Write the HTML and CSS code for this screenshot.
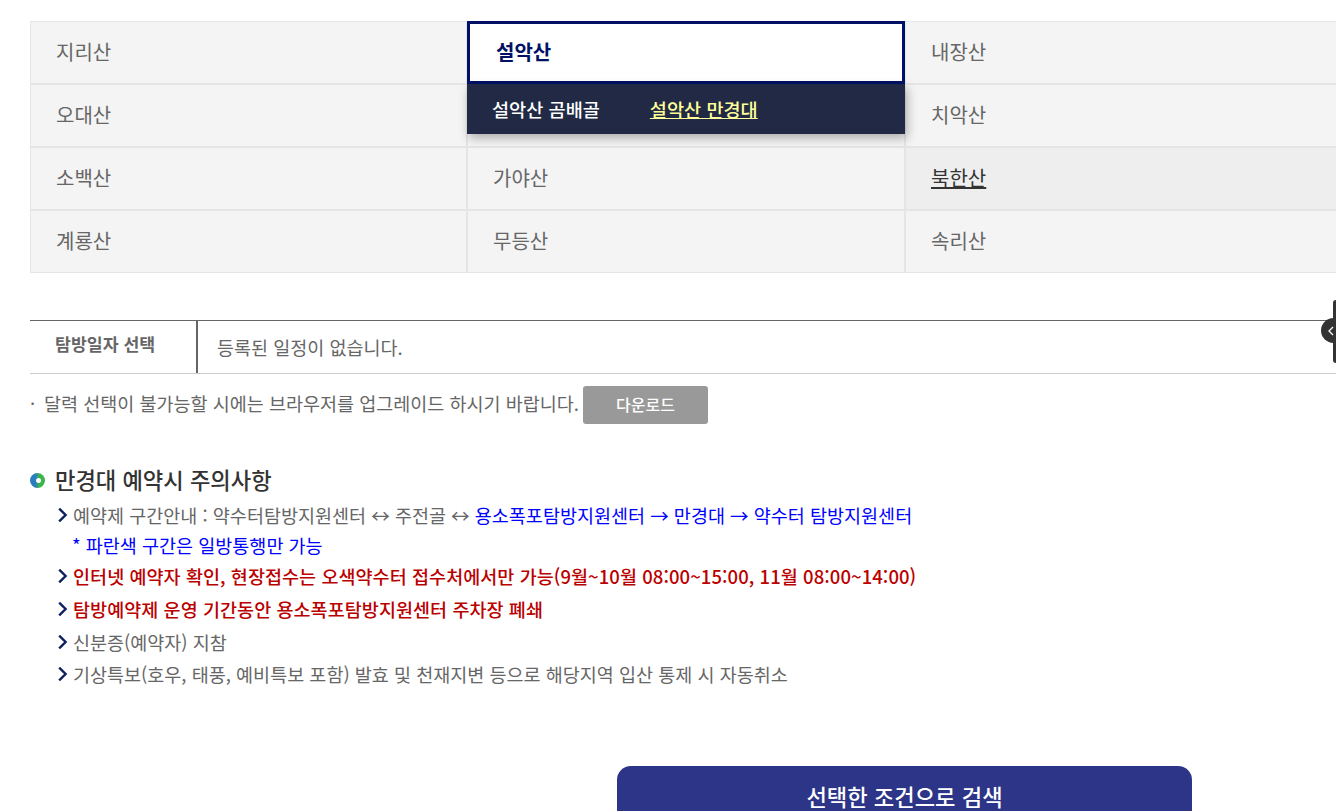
FILE: index.html
```html
<!DOCTYPE html>
<html lang="ko">
<head>
    <meta charset="UTF-8">
    <meta name="viewport" content="width=device-width, initial-scale=1.0">
    <title>탐방예약</title>
    <link rel="stylesheet" href="styles.css">
</head>
<body>
    <div class="wrap">
        <ul class="mountain-list">
            <li class="mountain">지리산</li>
            <li class="mountain selected">
                <span class="selected-name">설악산</span>
                <div class="sub-menu">
                    <a class="sub-link">설악산 곰배골</a>
                    <a class="sub-link active">설악산 만경대</a>
                </div>
            </li>
            <li class="mountain">내장산</li>
            <li class="mountain">오대산</li>
            <li class="mountain"></li>
            <li class="mountain">치악산</li>
            <li class="mountain">소백산</li>
            <li class="mountain">가야산</li>
            <li class="mountain hover"><a class="hover-link">북한산</a></li>
            <li class="mountain">계룡산</li>
            <li class="mountain">무등산</li>
            <li class="mountain">속리산</li>
        </ul>

        <div class="date-row">
            <div class="date-label">탐방일자 선택</div>
            <div class="date-value">등록된 일정이 없습니다.</div>
        </div>
        <div class="browser-note">
            <p class="note-text"><span class="note-dot">·</span>달력 선택이 불가능할 시에는 브라우저를 업그레이드 하시기 바랍니다.</p>
            <a class="btn-download">다운로드</a>
        </div>

        <h3 class="notice-title"><span class="title-dot"></span>만경대 예약시 주의사항</h3>
        <ul class="notice-list">
            <li>
                <svg class="arrow" width="10" height="14" viewBox="0 0 10 14"><path d="M1.2 .6 7.6 7l-6.4 6.4" fill="none" stroke="#0d2060" stroke-width="2.4"/></svg>
                <span>예약제 구간안내 : 약수터탐방지원센터 ↔ 주전골 ↔ <span class="blue">용소폭포탐방지원센터 → 만경대 → 약수터 탐방지원센터</span></span>
            </li>
            <li class="sub-note blue">* 파란색 구간은 일방통행만 가능</li>
            <li class="red">
                <svg class="arrow" width="10" height="14" viewBox="0 0 10 14"><path d="M1.2 .6 7.6 7l-6.4 6.4" fill="none" stroke="#0d2060" stroke-width="2.4"/></svg>
                <span>인터넷 예약자 확인, 현장접수는 오색약수터 접수처에서만 가능(9월~10월 08:00~15:00, 11월 08:00~14:00)</span>
            </li>
            <li class="red">
                <svg class="arrow" width="10" height="14" viewBox="0 0 10 14"><path d="M1.2 .6 7.6 7l-6.4 6.4" fill="none" stroke="#0d2060" stroke-width="2.4"/></svg>
                <span>탐방예약제 운영 기간동안 용소폭포탐방지원센터 주차장 폐쇄</span>
            </li>
            <li>
                <svg class="arrow" width="10" height="14" viewBox="0 0 10 14"><path d="M1.2 .6 7.6 7l-6.4 6.4" fill="none" stroke="#0d2060" stroke-width="2.4"/></svg>
                <span>신분증(예약자) 지참</span>
            </li>
            <li>
                <svg class="arrow" width="10" height="14" viewBox="0 0 10 14"><path d="M1.2 .6 7.6 7l-6.4 6.4" fill="none" stroke="#0d2060" stroke-width="2.4"/></svg>
                <span>기상특보(호우, 태풍, 예비특보 포함) 발효 및 천재지변 등으로 해당지역 입산 통제 시 자동취소</span>
            </li>
        </ul>

        <div class="search-area">
            <button class="btn-search" type="button">선택한 조건으로 검색</button>
        </div>
    </div>

    <div class="side-handle">
        <div class="side-bar"></div>
        <div class="side-knob">
            <svg width="8" height="10" viewBox="0 0 8 10"><path d="M6 1 2 5l4 4" fill="none" stroke="#fff" stroke-width="1.3"/></svg>
        </div>
    </div>
</body>
</html>
```

FILE: styles.css
```css
html, body {
    margin: 0;
    height: 811px;
    overflow: hidden;
    background-color: #fff;
}

body {
    font-family: "Noto Sans CJK KR", "Noto Sans", sans-serif;
    font-size: 18.5px;
    color: #666;
}

ul {
    list-style: none;
    margin: 0;
    padding: 0;
}

.wrap {
    width: 1313px;
    padding: 21px 0 0 30px;
}

.mountain-list {
    display: grid;
    grid-template-columns: 437px 438px 438px;
    grid-template-rows: 63px 63px 63px 62px;
    border-top: 1px solid #e5e5e5;
    margin-bottom: 47px;
    box-sizing: border-box;
    height: 252px;
}

.mountain {
    box-sizing: border-box;
    display: flex;
    align-items: center;
    padding: 0 0 2px 25px;
    background-color: #f4f4f4;
    border-left: 1px solid #e5e5e5;
    border-right: 1px solid #e5e5e5;
    border-bottom: 2px solid #e5e5e5;
    font-size: 20px;
    line-height: 1;
}

.mountain:nth-last-child(-n+3) {
    border-bottom-width: 1px;
}

.mountain.hover {
    background-color: #eee;
    color: #333;
}

.hover-link {
    text-decoration: underline;
    text-decoration-thickness: 2px;
}

.mountain.selected {
    position: relative;
    padding-left: 26px;
    margin: -1px 0 1px 0;
    border: 3px solid #001166;
    background-color: #fff;
    color: #001166;
    font-weight: 700;
    z-index: 2;
}

.sub-menu {
    position: absolute;
    top: 60px;
    left: -3px;
    right: -3px;
    height: 50px;
    display: flex;
    align-items: center;
    gap: 50px;
    padding-left: 25px;
    background-color: #212944;
    box-shadow: 2px 4px 10px rgba(0, 0, 0, 0.3);
    font-size: 18.6px;
    font-weight: 500;
    color: #fff;
}

.sub-link.active {
    color: #ffff99;
    text-decoration: underline;
}

.date-row {
    display: flex;
    height: 54px;
    box-sizing: border-box;
    border-top: 1px solid #666;
    border-bottom: 1px solid #ccc;
}

.date-label {
    width: 168px;
    box-sizing: border-box;
    border-right: 2px solid #666;
    padding: 0 0 8px 25px;
    display: flex;
    align-items: center;
    font-size: 17.3px;
    font-weight: 700;
}

.date-value {
    padding-left: 19px;
    display: flex;
    align-items: center;
}

.browser-note {
    margin: 12px 0 0;
    height: 38px;
    display: flex;
    align-items: center;
}

.note-text {
    margin: 0 0 4px;
}

.note-dot {
    display: inline-block;
    width: 14px;
}

.btn-download {
    width: 125px;
    height: 38px;
    box-sizing: border-box;
    padding-bottom: 2px;
    margin-left: 4px;
    display: flex;
    align-items: center;
    justify-content: center;
    background-color: #999;
    border-radius: 3px;
    color: #fff;
    font-size: 16px;
    font-weight: 500;
}

.notice-title {
    display: flex;
    align-items: center;
    margin: 38px 0 0;
    height: 34px;
    font-size: 22.2px;
    font-weight: 500;
    color: #333;
}

.title-dot {
    width: 15px;
    height: 15px;
    margin: 3px 10px 0 0;
    border-radius: 50%;
    background:
        radial-gradient(circle at 57% 50%, #fff 0 2px, transparent 3px),
        linear-gradient(90deg, #2a7dc0 35%, #39b54a 62%);
}

.notice-list {
    margin-top: 3px;
    padding-left: 28px;
}

.notice-list li {
    display: flex;
    align-items: center;
    gap: 5px;
    height: 32.6px;
}

.notice-list li.sub-note {
    box-sizing: border-box;
    padding: 0 0 2.5px 14px;
    height: 28.5px;
}

.arrow {
    flex: none;
}

.blue {
    color: #0000ff;
}

.red {
    color: #bb0000;
    font-weight: 500;
    letter-spacing: 0.05px;
}

.search-area {
    margin-top: 76px;
    padding-left: 587px;
}

.btn-search {
    display: block;
    width: 575px;
    height: 80px;
    padding: 0 0 20px;
    border: none;
    border-radius: 14px;
    background-color: #2c3587;
    color: #fff;
    font-family: inherit;
    font-size: 22.2px;
    font-weight: 500;
}

.side-handle {
    position: fixed;
    top: 300px;
    right: 0;
    width: 15px;
    height: 63px;
}

.side-bar {
    position: absolute;
    top: 0;
    right: 0;
    width: 3px;
    height: 63px;
    background-color: #333;
    border-radius: 3px 0 0 3px;
}

.side-knob {
    position: absolute;
    top: 18px;
    left: 0;
    width: 25px;
    height: 25px;
    background-color: #333;
    border-radius: 50%;
    display: flex;
    align-items: center;
    padding-left: 6px;
    box-sizing: border-box;
}
```
